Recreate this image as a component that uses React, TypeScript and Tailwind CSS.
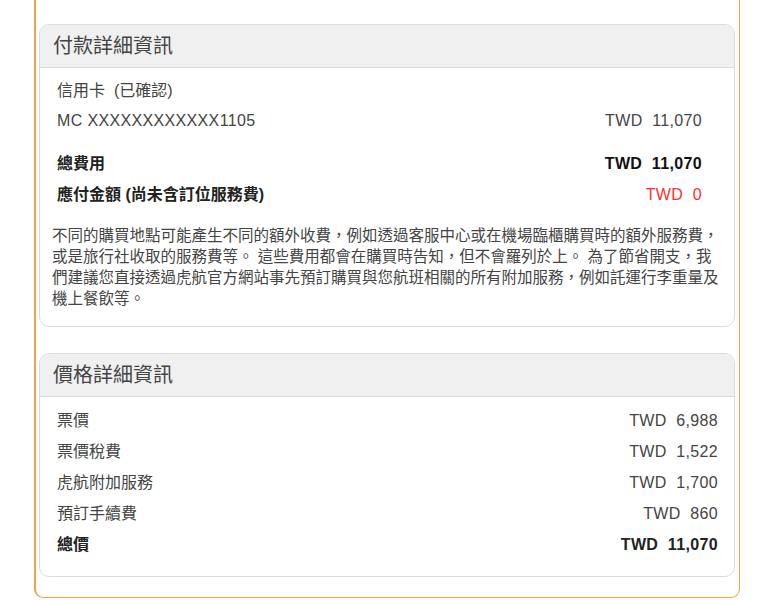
import React from "react";

const font = { fontFamily: '"Liberation Sans", Arial, "Noto Sans CJK TC", sans-serif' };

function Row({
  label,
  amount,
  bold = false,
  latin = false,
  amountClass = "text-[#444]",
  pr = "pr-[32px]",
  h = "h-[30px]",
}: {
  label: string;
  amount: string;
  bold?: boolean;
  latin?: boolean;
  amountClass?: string;
  pr?: string;
  h?: string;
}) {
  return (
    <div className={`flex items-center justify-between pl-[17px] ${pr} ${h} text-[16px]`}>
      <span
        className={`whitespace-pre ${bold ? "font-semibold text-[#222]" : "text-[#444]"} ${
          latin ? "tracking-[0.35px]" : ""
        }`}
      >
        {label}
      </span>
      <span className={`${amountClass} whitespace-pre tracking-[0.35px]`}>{amount ? `TWD  ${amount}` : ""}</span>
    </div>
  );
}

function Header({ title }: { title: string }) {
  return (
    <div className="h-[43px] bg-[#f0f0f0] border-b border-[#dcdcdc] flex items-center pl-[13px] text-[20px] text-[#444]">
      {title}
    </div>
  );
}

export default function App() {
  return (
    <div className="w-[765px] h-[600px] bg-white overflow-hidden" style={font}>
      <div className="ml-[34px] w-[706px] border-l-2 border-r border-b border-[#f5a04b] rounded-b-[9px] pl-[3px] pr-[4px] pt-[24px] pb-[20px]">
        {/* Panel 1 */}
        <div className="border border-[#dcdcdc] rounded-[10px] overflow-hidden">
          <Header title="付款詳細資訊" />
          <div className="pt-[8px] pb-[17px]">
            <Row label="信用卡  (已確認)" amount="" />
            <Row label="MC XXXXXXXXXXXX1105" amount="11,070" latin />
            <div className="h-[12px]" />
            <Row label="總費用" amount="11,070" bold amountClass="font-bold text-[#111]" h="h-[31px]" />
            <Row label="應付金額 (尚未含訂位服務費)" amount="0" bold amountClass="text-[#ff3030]" h="h-[31px]" />
            <p className="mt-[15px] px-[12px] text-[15.5px] leading-[21px] text-[#444] whitespace-nowrap">
              不同的購買地點可能產生不同的額外收費，例如透過客服中心或在機場臨櫃購買時的額外服務費，
              <br />
              或是旅行社收取的服務費等。 這些費用都會在購買時告知，但不會羅列於上。 為了節省開支，我
              <br />
              們建議您直接透過虎航官方網站事先預訂購買與您航班相關的所有附加服務，例如託運行李重量及
              <br />
              機上餐飲等。
            </p>
          </div>
        </div>

        <div className="h-[26px]" />

        {/* Panel 2 */}
        <div className="border border-[#dcdcdc] rounded-[10px] overflow-hidden">
          <Header title="價格詳細資訊" />
          <div className="pt-[8px] pb-[16px]">
            <Row label="票價" amount="6,988" pr="pr-[16px]" h="h-[31px]" />
            <Row label="票價稅費" amount="1,522" pr="pr-[16px]" h="h-[31px]" />
            <Row label="虎航附加服務" amount="1,700" pr="pr-[16px]" h="h-[31px]" />
            <Row label="預訂手續費" amount="860" pr="pr-[16px]" h="h-[31px]" />
            <Row label="總價" amount="11,070" bold amountClass="font-bold text-[#222]" pr="pr-[16px]" h="h-[31px]" />
          </div>
        </div>
      </div>
    </div>
  );
}
